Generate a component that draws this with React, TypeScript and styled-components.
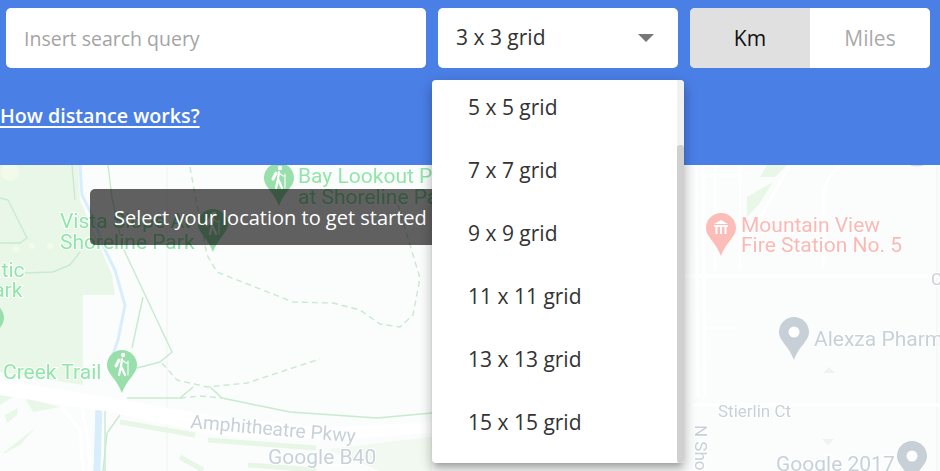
import * as React from 'react';
import styled, { createGlobalStyle } from 'styled-components';

const GRID_OPTIONS = ['5 x 5 grid', '7 x 7 grid', '9 x 9 grid', '11 x 11 grid', '13 x 13 grid', '15 x 15 grid'];

const TRAILS = [
  'M0 198 L8 200 L27 238 L20 243 L0 243',
  'M23 273 L53 272 L70 265 L80 252',
  'M72 165 L75 200',
  'M108 165 L112 198 L123 248 L172 352 L160 362 L137 368',
  'M143 297 L132 348',
  'M127 398 L180 398 L193 387',
  'M210 387 L222 398 L290 412 L377 418 L432 413',
  'M120 415 L107 433 L103 471',
  'M105 411 L105 471',
];

const DASHED_TRAILS = [
  'M190 167 L195 195 L203 235 L207 255 L217 272 L293 302 L333 303 L360 310 L380 324 L400 327 L413 315 L420 278 L407 235 L398 205',
  'M162 363 L177 380 L207 387 L247 383 L320 359',
  'M180 398 L200 396 L222 398',
];

const ROADS = [
  'M62 407 L80 430 L83 471',
  'M82 408 L88 440 L90 471',
  'M696 165 L698 397',
  'M703 165 L705 397',
  'M705 328 L737 328',
  'M685 276 L940 276',
  'M692 405 L940 405',
  'M740 165 L740 270',
  'M700 175 L740 175',
  'M715 165 L715 270',
  'M790 165 L760 218',
  'M823 268 L823 195 Q826 178 840 165',
];

const PIN = 'M0 -15 C8.3 -15 15 -8.3 15 0 C15 9 5 14 0 28 C-5 14 -15 9 -15 0 C-15 -8.3 -8.3 -15 0 -15Z';

const HikerIcon: React.FC = () => (
  <g stroke="#fff" fill="none" strokeLinecap="round">
    <circle cx="1" cy="-10" r="2.2" fill="#fff" stroke="none" />
    <path d="M0 -6 L-1 1 L-3 10 M-1 1 L3 10" strokeWidth="2.2" />
    <path d="M0 -5 L4 -2 L6 -2 M6 -4 L6 10" strokeWidth="1.1" />
    <path d="M-3 -5 L-6 1" strokeWidth="3" />
  </g>
);

const StationIcon: React.FC = () => (
  <g fill="#fff">
    <path d="M-7 -4 L0 -8 L7 -4 Z" />
    <path d="M-7 -3 H7 V-1 H-7 Z M-5.5 -1 H-3.5 V6 H-5.5 Z M-1 -1 H1 V6 H-1 Z M3.5 -1 H5.5 V6 H3.5 Z" />
  </g>
);

const App: React.FC = () => {
  return (
    <>
      <GlobalStyle />
      <Page>
        <Header>
          <Controls>
            <SearchInput placeholder="Insert search query" />
            <SelectBox>
              <SelectValue>3 x 3 grid</SelectValue>
              <SelectArrow />
            </SelectBox>
            <UnitToggle>
              <UnitButton $active>Km</UnitButton>
              <UnitButton>Miles</UnitButton>
            </UnitToggle>
          </Controls>
          <HelpLink href="#">How distance works?</HelpLink>
        </Header>

        <MapArea>
          <MapSvg viewBox="0 165 940 306">
            <rect x="0" y="165" width="940" height="306" fill="#fbfcfc" />
            <path d="M0 165 L78 165 L80 200 L95 235 L112 275 L115 295 L83 295 L83 385 L0 372 Z" fill="#e9f7e9" />
            <circle cx="10" cy="172" r="9" fill="#f2fbe9" />
            <circle cx="16" cy="249" r="3" fill="#f2fbe9" />
            <circle cx="32" cy="246" r="3" fill="#f2fbe9" />
            <circle cx="50" cy="246" r="3" fill="#f2fbe9" />
            <path d="M167 165 V471 M937 165 V471" stroke="#f1f3f3" fill="none" />

            <path d="M80 165 L82 195 L92 215 L105 250 L115 270 L125 305 L118 340 L111 360" stroke="#d8eefc" strokeWidth="3" fill="none" />
            <path d="M99 405 L97 471" stroke="#d8eefc" strokeWidth="7" fill="none" />

            <path d="M0 395 L13 397 L0 405 Z M25 398 L60 407 L33 412 Z M5 415 L18 408 L17 415 L7 423 Z M3 453 L35 428 L20 445 L5 453 Z" fill="#e9f7e9" />
            <path d="M767 165 L787 165 L775 177 L760 177 Z M747 197 L773 182 L760 203 L747 217 Z" fill="#e9f7e9" />
            <path d="M328 449 L432 437 L432 471 L380 471 Z" fill="#f2f9f1" />
            <path d="M120 422 L195 435 M208 440 L316 448 M180 457 L203 470 M248 465 L316 470" stroke="#e8f6e6" strokeWidth="5" fill="none" />

            <path d="M0 380 L110 398 L220 417 L320 428 L432 422 V433 L330 440 L220 436 L110 412 L0 395 Z" fill="#fff" />
            {ROADS.map(d => (
              <RoadLine key={d} d={d} />
            ))}
            {TRAILS.map(d => (
              <TrailLine key={d} d={d} />
            ))}
            {DASHED_TRAILS.map(d => (
              <TrailLine key={d} d={d} $dashed />
            ))}
            <path d="M829 367 L835 373 H823 Z M822 439 H834 L828 445 Z" fill="#eff2f2" />
            <ellipse cx="917" cy="165" rx="7" ry="1.5" fill="#d3dadf" />

            <g transform="translate(279 178)">
              <path d={PIN} fill="#98dfab" />
              <HikerIcon />
            </g>
            <g transform="translate(213 224)">
              <path d={PIN} fill="#98dfab" />
              <HikerIcon />
            </g>
            <g transform="translate(122 365)">
              <path d={PIN} fill="#98dfab" />
              <HikerIcon />
            </g>
            <g transform="translate(-11 318)">
              <path d={PIN} fill="#98dfab" />
            </g>
            <g transform="translate(721 228)">
              <path d={PIN} fill="#fcbcb8" />
              <StationIcon />
            </g>
            <g transform="translate(794 332)">
              <path d={PIN} fill="#c6d0d6" />
              <circle r="5.5" fill="#fff" />
            </g>
            <g transform="translate(912 456)">
              <path d={PIN} fill="#c6d0d6" />
              <circle r="5.5" fill="#fff" />
            </g>

            <MapLabel x="60" y="228" $tone="park">Vista Slope At</MapLabel>
            <MapLabel x="60" y="249" $tone="park">Shoreline Park</MapLabel>
            <MapLabel x="298" y="183" $tone="park">Bay Lookout Park</MapLabel>
            <MapLabel x="298" y="204" $tone="park">at Shoreline Park</MapLabel>
            <MapLabel x="-47" y="277" $tone="park">Atlantic</MapLabel>
            <MapLabel x="-20" y="297" $tone="park">Park</MapLabel>
            <MapLabel x="3" y="379" $tone="park">Creek Trail</MapLabel>
            <MapLabel x="741" y="232" $tone="fire">Mountain View</MapLabel>
            <MapLabel x="741" y="252" $tone="fire">Fire Station No. 5</MapLabel>
            <MapLabel x="814" y="346" $tone="place">Alexza Pharmaceuticals</MapLabel>
            <MapLabel x="268" y="464" $tone="place">Google B40</MapLabel>
            <MapLabel x="776" y="471" $tone="place">Google 2017</MapLabel>
            <MapLabel x="190" y="428" $tone="place" $size={19.2} transform="rotate(5 190 428)">Amphitheatre Pkwy</MapLabel>
            <MapLabel x="718" y="417" $tone="place" $size={17}>Stierlin Ct</MapLabel>
            <MapLabel x="931" y="285" $tone="place" $size={17}>Charleston</MapLabel>
            <MapLabel x="695" y="425" $tone="place" $size={17} transform="rotate(90 695 425)">N Shoreline</MapLabel>
          </MapSvg>
          <MapHint>Select your location to get started</MapHint>
        </MapArea>

        <GridMenu>
          <GridList>
            {GRID_OPTIONS.map(option => (
              <GridItem key={option}>{option}</GridItem>
            ))}
          </GridList>
          <ScrollTrack>
            <ScrollThumb />
          </ScrollTrack>
        </GridMenu>
      </Page>
    </>
  );
};

const GlobalStyle = createGlobalStyle`
  html, body {
    margin: 0;
    padding: 0;
  }

  body {
    font-family: 'Open Sans', 'Liberation Sans', sans-serif;
    overflow: hidden;
  }
`;

const Page = styled.div`
  position: relative;
  display: flex;
  flex-direction: column;
  width: 940px;
  height: 471px;
  overflow: hidden;
`;

const Header = styled.header`
  flex: 0 0 165px;
  box-sizing: border-box;
  padding: 8px 10px 0 6px;
  background: #4a7fe6;
`;

const Controls = styled.div`
  display: grid;
  grid-template-columns: 420px 240px 240px;
  gap: 12px;
  height: 60px;
`;

const SearchInput = styled.input`
  box-sizing: border-box;
  width: 100%;
  height: 60px;
  padding: 0 18px;
  border: 0;
  border-radius: 5px;
  background: #fff;
  font: 19.5px 'Open Sans', sans-serif;
  color: #333;
  outline: none;

  &::placeholder {
    color: #a4a4a4;
    opacity: 1;
  }
`;

const SelectBox = styled.div`
  display: flex;
  align-items: center;
  justify-content: space-between;
  padding: 0 24px 0 18px;
  border-radius: 5px;
  background: #fff;
`;

const SelectValue = styled.span`
  margin-bottom: 2px;
  font-size: 21px;
  color: #333;
`;

const SelectArrow = styled.span`
  width: 0;
  height: 0;
  border-left: 8px solid transparent;
  border-right: 8px solid transparent;
  border-top: 8px solid #777;
`;

const UnitToggle = styled.div`
  display: grid;
  grid-template-columns: 1fr 1fr;
  border-radius: 5px;
  overflow: hidden;
  background: #fff;
`;

const UnitButton = styled.button<{ $active?: boolean }>`
  border: 0;
  padding: 0;
  background: ${p => (p.$active ? '#e0e0e0' : '#fff')};
  color: ${p => (p.$active ? '#111' : '#aaa')};
  font: 21px 'Open Sans', sans-serif;
`;

const HelpLink = styled.a`
  display: inline-block;
  margin: 34px 0 0 -6px;
  color: #fff;
  font-size: 19.7px;
  font-weight: 600;
  line-height: 28px;
  text-decoration: underline;
  text-decoration-thickness: 2px;
  text-underline-offset: 3px;
`;

const MapArea = styled.main`
  position: relative;
  flex: 1;
  overflow: hidden;
`;

const MapSvg = styled.svg`
  display: block;
  width: 940px;
  height: 306px;
  filter: blur(0.4px);
`;

const RoadLine = styled.path`
  fill: none;
  stroke: #fff;
  stroke-width: 3;
`;

const TrailLine = styled.path<{ $dashed?: boolean }>`
  fill: none;
  stroke: #c8ead0;
  stroke-width: 1.4;
  stroke-dasharray: ${p => (p.$dashed ? '6 4' : 'none')};
`;

const LABEL_COLORS = {
  park: '#90e6a9',
  fire: '#fab9b5',
  place: '#c7d1d8',
};

const MapLabel = styled.text<{ $tone: keyof typeof LABEL_COLORS; $size?: number }>`
  font-family: Roboto, sans-serif;
  font-size: ${p => p.$size ?? 21}px;
  fill: ${p => LABEL_COLORS[p.$tone]};
  stroke: #fff;
  stroke-width: 2px;
  paint-order: stroke;
`;

const MapHint = styled.div`
  position: absolute;
  left: 90px;
  top: 24px;
  width: 370px;
  height: 56px;
  box-sizing: border-box;
  padding: 1px 24px 0;
  border-radius: 5px;
  background: rgba(0, 0, 0, 0.62);
  color: #fff;
  font-size: 20px;
  line-height: 56px;
  white-space: nowrap;
`;

const GridMenu = styled.div`
  position: absolute;
  left: 432px;
  top: 80px;
  display: flex;
  width: 252px;
  height: 383px;
  border-radius: 4px;
  overflow: hidden;
  background: #fff;
  box-shadow: 0 5px 5px -3px rgba(0, 0, 0, 0.2), 0 8px 10px 1px rgba(0, 0, 0, 0.14), 0 3px 14px 2px rgba(0, 0, 0, 0.12);
`;

const GridList = styled.ul`
  flex: 1;
  margin: -4px 0 0;
  padding: 0;
  list-style: none;
`;

const GridItem = styled.li`
  height: 63px;
  padding-left: 36px;
  color: #333;
  font-size: 21px;
  line-height: 63px;
`;

const ScrollTrack = styled.div`
  flex: 0 0 7px;
  background: #f1f1f1;
`;

const ScrollThumb = styled.div`
  height: 318px;
  margin-top: 65px;
  border-radius: 3px;
  background: #d0d0d0;
`;

export default App;
